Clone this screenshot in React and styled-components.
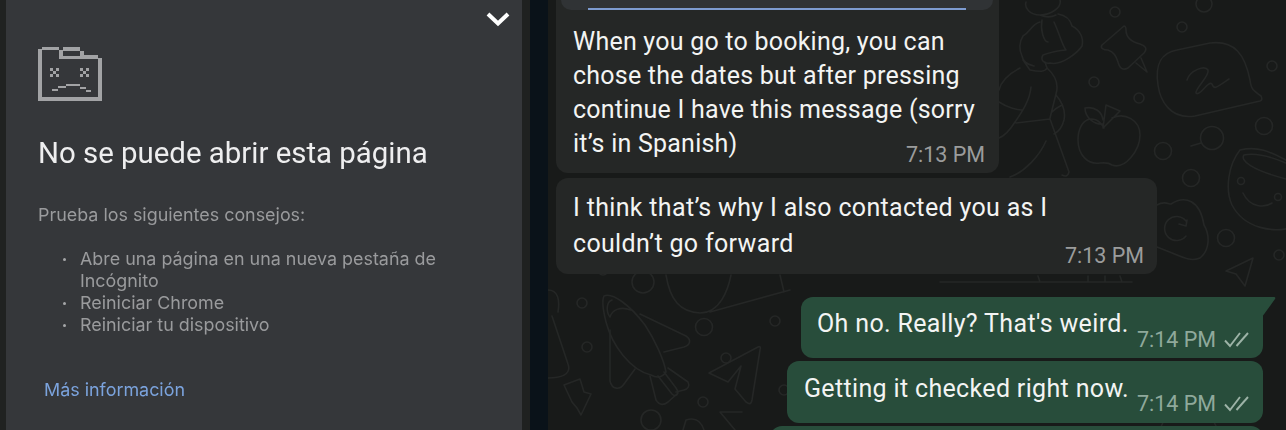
import React from 'react';
import styled, { createGlobalStyle } from 'styled-components';

const Global = createGlobalStyle`
  html, body { margin: 0; padding: 0; background: #181a19; }
  body { font-family: Roboto, "Liberation Sans", sans-serif; }
`;

const Page = styled.div`
  display: grid;
  grid-template-columns: 6px 516px 8px 18px 738px;
  width: 1286px;
  height: 430px;
  overflow: hidden;
`;

const Edge = styled.div`
  background: ${(p) => p.$color};
`;

const Panel = styled.section`
  position: relative;
  background: #35373a;
  padding: 47px 0 0 32px;
  color: #9a9b9d;
  font-family: Inter, Roboto, sans-serif;
`;

const Chevron = styled.svg`
  position: absolute;
  top: 10px;
  right: 10px;
  width: 28px;
  height: 18px;
`;

const Folder = styled.svg`
  display: block;
  width: 64px;
  height: 54px;
  fill: #a2a3a5;
  filter: blur(0.5px);
`;

const Title = styled.h1`
  margin: 32px 0 0;
  font: 400 29.4px/40px Roboto, sans-serif;
  color: #eeeeef;
  filter: blur(0.3px);
`;

const Hint = styled.p`
  margin: 31px 0 0;
  font-size: 17.9px;
  line-height: 22px;
  filter: blur(0.35px);
`;

const Tips = styled.ul`
  list-style: none;
  margin: 22px 0 0;
  padding: 0 0 0 42px;
  width: 400px;
  font-size: 17.9px;
  line-height: 22px;
  filter: blur(0.35px);
`;

const Tip = styled.li`
  position: relative;
  &::before {
    content: '';
    position: absolute;
    left: -17px;
    top: 10px;
    width: 3px;
    height: 3px;
    border-radius: 50%;
    background: #a5a6a8;
  }
`;

const More = styled.a`
  display: block;
  margin: 43px 0 0 6px;
  font-size: 17.9px;
  line-height: 22px;
  color: #7ba3dd;
  filter: blur(0.35px);
`;

const Chat = styled.main`
  position: relative;
  display: flex;
  flex-direction: column;
  background: #181a19;
  padding: 0 23px 0 8px;
  overflow: hidden;
`;

const Wallpaper = styled.svg`
  position: absolute;
  inset: 0;
  width: 738px;
  height: 430px;
  fill: none;
  stroke: #252726;
  stroke-width: 1.6;
  stroke-linecap: round;
  stroke-linejoin: round;
`;

const Bubble = styled.div`
  position: relative;
  box-sizing: border-box;
  flex: none;
  display: grid;
  width: ${(p) => p.$width}px;
  height: ${(p) => p.$height}px;
  margin-top: ${(p) => p.$top || 0}px;
  align-self: ${(p) => (p.$out ? 'flex-end' : 'flex-start')};
  background: ${(p) => (p.$out ? '#284d3b' : '#252726')};
  border-radius: ${(p) => p.$radius || '12px'};
  padding: ${(p) => p.$pad};
  color: #f3f4f3;
  font-size: 25px;
`;

const Quote = styled.div`
  position: absolute;
  top: 0;
  left: 5px;
  right: 6px;
  height: 10px;
  background: #303335;
  border-radius: 0 0 10px 10px;
  &::after {
    content: '';
    position: absolute;
    left: 27px;
    right: 27px;
    bottom: 0;
    height: 2px;
    background: #7d9bd0;
  }
`;

const Text = styled.div`
  grid-area: 1 / 1;
  line-height: ${(p) => p.$line || 34}px;
  letter-spacing: ${(p) => p.$spacing || 0}px;
  white-space: nowrap;
`;

const Meta = styled.div`
  grid-area: 1 / 1;
  justify-self: end;
  align-self: end;
  display: flex;
  align-items: center;
  gap: 8px;
  font-size: 21.5px;
  line-height: 26px;
  color: ${(p) => (p.$out ? '#8fa99b' : '#9b9c9c')};
`;

const Ticks = styled.svg`
  width: 25px;
  height: 16px;
  fill: none;
  stroke: #9db3a7;
  stroke-width: 1.9;
`;

const Tail = styled.svg`
  position: absolute;
  top: 0;
  left: 100%;
  margin-left: -1px;
  width: 14px;
  height: 20px;
  fill: #284d3b;
`;

function Time({ value, out }) {
  return (
    <Meta $out={out}>
      {value}
      {out && (
        <Ticks viewBox="0 0 25 16">
          <path d="M1 8.5 L6 14 L16 1" />
          <path d="M12.5 14 L24 1" />
        </Ticks>
      )}
    </Meta>
  );
}

// chat background doodles, coordinates are page x minus 548
function Doodles() {
  const dots = [
    [1115, 12, 5], [1182, 27, 5], [1094, 82, 5], [1139, 98, 5], [1272, 66, 5], [1264, 126, 8.5],
    [1163, 151, 8.5], [1191, 178, 8.5], [1226, 238, 8.5], [1279, 255, 5], [1204, 4, 8],
    [582, 303, 5], [587, 347, 5], [643, 282, 11], [726, 358, 5], [704, 327, 8.5], [775, 321, 5],
    [703, 402, 5], [651, 420, 10], [784, 390, 5], [603, 270, 5],
  ];
  return (
    <Wallpaper viewBox="548 0 738 430">
      {dots.map(([x, y, r]) => (
        <circle key={`${x}-${y}`} cx={x} cy={y} r={r} />
      ))}
      {/* girl with bow */}
      <path d="M1040 15 C1030 15 1024 8 1026 2 M1040 15 C1050 15 1062 8 1060 0 M1040 15 C1047 18 1052 17 1056 15" />
      <path d="M1040 22 C1032 24 1030 32 1023 36 C1019 42 1019 50 1022 56 C1023 62 1027 64 1034 66 M1023 60 L1030 70 C1040 72 1045 72 1047 68 L1045 62" />
      <path d="M1042 20 C1040 30 1044 42 1048 42 M1054 22 C1060 35 1062 45 1066 50 C1060 50 1048 53 1043 55 C1040 60 1044 64 1050 63 C1062 66 1078 52 1082 46 C1084 38 1080 30 1072 26 C1070 18 1064 15 1058 14" />
      <path d="M1020 68 C1008 74 1001 82 999 90 M1047 68 C1056 76 1059 84 1056 94 L1050 118 M1031 87 C1030 100 1022 112 1015 122 C1010 130 1004 136 999 138 M999 102 C1008 108 1018 110 1022 110 M1016 123 L1050 119 L1069 172 C1068 176 1066 177 1062 175 M1046 141 C1040 155 1025 172 1010 177 M1056 95 C1062 102 1066 110 1064 120 C1062 128 1058 132 1054 134 M1052 112 C1056 108 1060 106 1062 105" />
      {/* pin */}
      <path d="M1124 26 L1102 45 C1100 48 1103 50 1108 50 C1114 52 1116 56 1118 62 C1120 70 1124 70 1128 68 L1144 53 C1148 48 1145 46 1140 44 C1132 42 1126 38 1126 30 C1126 27 1125 26 1124 26 Z M1136 63 L1147 72 L1141 58" />
      {/* signature bubble */}
      <path d="M1177 50 L1210 43 C1235 40 1245 55 1250 80 C1251 88 1252 90 1261 96 Q1263 100 1260 101 L1195 116 C1170 120 1160 100 1158 85 C1155 65 1160 53 1177 50 Z" />
      <path d="M1187 80 C1190 70 1205 65 1208 70 C1210 76 1195 88 1196 93 C1200 97 1208 80 1212 84 C1214 90 1216 88 1229 79" />
      {/* apple */}
      <path d="M1104 128 C1095 112 1078 118 1078 140 C1078 155 1088 165 1100 163 C1105 163 1108 162 1112 165 C1125 170 1140 150 1140 135 C1140 120 1125 112 1112 118 M1103 128 L1106 105 L1120 111 Z M1103 124 C1095 125 1085 118 1085 108 C1095 106 1102 112 1103 120" />
      {/* magnifier and smiley */}
      <circle cx="1212" cy="138" r="11.5" />
      <path d="M1201 143 L1191 146" />
      <path d="M1240 150 C1262 145 1275 155 1290 162 M1244 155 C1258 152 1275 158 1290 165 M1244 155 C1240 160 1250 170 1290 180 M1240 150 C1228 165 1225 190 1232 205 C1245 230 1275 232 1290 228" />
      <path d="M1243 193 C1250 208 1265 208 1272 203" />
      <circle cx="1241" cy="181" r="3.5" />
      <circle cx="1278" cy="197" r="3.5" />
      {/* cloud with arrow */}
      <path d="M1157 205 C1165 200 1170 205 1171 204 C1185 195 1200 200 1204 225 C1210 235 1210 250 1200 258 C1190 262 1185 258 1157 247" />
      <path d="M1186 221 A12 12 0 1 0 1186 236 M1187 220 L1186 226 L1179 224" />
      {/* plane */}
      <path d="M1226 271 L1253 258 L1245 286 L1236 274 Z" />
      {/* table under the bubbles */}
      <path d="M940 282 L1132 282 M1038 276 L1040 282 M1088 276 L1088 282 M1105 276 L1105 282 M1120 276 L1122 282" />
      {/* rocket */}
      <path d="M604 296 C612 292 630 305 645 325 C655 340 664 360 666 372 C662 378 656 378 651 375 C630 370 612 345 606 322 C603 310 602 300 604 296 Z" />
      <path d="M610 317 C612 310 620 306 631 310 M610 317 C606 312 606 302 612 300" />
      <path d="M610 330 L610 381 C612 390 620 390 624 384 L635 369 M640 314 L686 336 C692 340 690 345 684 347 L664 352 M668 368 L688 382 C690 386 688 389 684 390 L676 392 M650 376 L656 400 C660 406 664 405 668 402 L678 393 M658 376 L672 394 C676 398 680 394 676 388 L664 372" />
      <path d="M548 290 C558 290 560 300 558 312 M552 316 L568 364 C572 375 560 378 548 378" />
      {/* bolt */}
      <path d="M564 385 L580 379 L584 392 L591 394 L581 415 L577 408 L572 402 L564 385 Z" />
      {/* big oval */}
      <path d="M666 275 C670 300 680 312 700 313 C720 313 728 290 731 275 M710 312 L790 290 M780 275 L784 292" />
      {/* big plane */}
      <path d="M709 373 L758 347 C760 346 761 347 760 350 L752 400 C751 405 749 404 746 402 L735 389 L741 366 L728 382 Z" />
      <path d="M683 430 L686 420 C692 418 700 418 704 430 M735 430 L720 412 L742 412" />
      <path d="M1160 430 C1166 408 1192 398 1212 418 L1218 430" />
    </Wallpaper>
  );
}

function App() {
  return (
    <Page>
      <Global />
      <Edge $color="#202221" />
      <Panel>
        <Chevron viewBox="0 0 28 18">
          <path d="M4 4 L14 13.5 L24 4" fill="none" stroke="#fff" strokeWidth="4" />
        </Chevron>
        <Folder viewBox="0 0 64 54">
          <path d="M4 0h17v3H4zM25 0h17v4H25zM0 2h4v52H0zM21 3h4v9h-4zM42 4h4v5h-4zM25 9h35v3H25zM46 8h14v3H46zM60 11h4v43h-4zM4 50h56v4H4z" />
          <path d="M12 21h3v3h-3zM18 21h3v3h-3zM15 24h3v3h-3zM12 27h3v3h-3zM18 27h3v3h-3zM42 21h3v3h-3zM48 21h3v3h-3zM45 24h3v3h-3zM42 27h3v3h-3zM48 27h3v3h-3z" />
          <path d="M14 42h6v2h-6zM20 39h8v2h-8zM28 37h14v2H28zM42 40h6v2h-6zM48 43h5v2h-5z" />
        </Folder>
        <Title>No se puede abrir esta página</Title>
        <Hint>Prueba los siguientes consejos:</Hint>
        <Tips>
          <Tip>Abre una página en una nueva pestaña de Incógnito</Tip>
          <Tip>Reiniciar Chrome</Tip>
          <Tip>Reiniciar tu dispositivo</Tip>
        </Tips>
        <More>Más información</More>
      </Panel>
      <Edge $color="#1f2120" />
      <Edge $color="#0a1219" />
      <Chat>
        <Doodles />
        <Bubble $width={443} $height={173} $pad="25px 14px 5px 17px" $radius="0 0 12px 12px">
          <Quote />
          <Text $spacing={0.23}>
            When you go to booking, you can<br />
            chose the dates but after pressing<br />
            continue I have this message (sorry<br />
            it’s in Spanish)
          </Text>
          <Time value="7:13 PM" />
        </Bubble>
        <Bubble $width={601} $height={96} $top={5} $pad="11.5px 13px 5px 17px">
          <Text $line={36} $spacing={0.33}>
            I think that’s why I also contacted you as I<br />
            couldn’t go forward
          </Text>
          <Time value="7:13 PM" />
        </Bubble>
        <Bubble $out $width={462} $height={61} $top={23} $pad="10px 14px 5px 16px" $radius="12px 0 12px 12px">
          <Tail viewBox="0 0 14 20"><path d="M0 0 H12 Q14 0 13 2 L0 20 Z" /></Tail>
          <Text $spacing={0.35}>Oh no. Really? That's weird.</Text>
          <Time value="7:14 PM" out />
        </Bubble>
        <Bubble $out $width={476} $height={62} $top={3} $pad="11px 14px 6px 17px">
          <Text $spacing={0.34}>Getting it checked right now.</Text>
          <Time value="7:14 PM" out />
        </Bubble>
        <Bubble $out $width={493} $height={40} $top={3} />
      </Chat>
    </Page>
  );
}

export default App;
